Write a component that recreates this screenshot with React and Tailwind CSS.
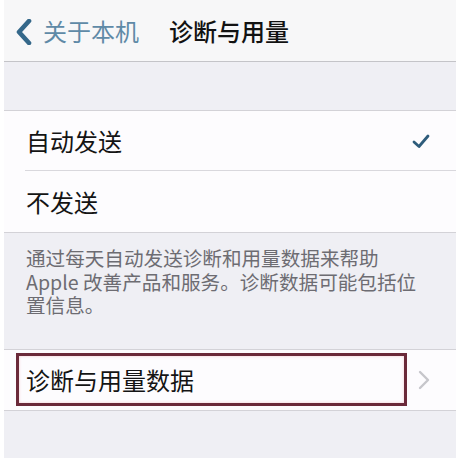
const font = { fontFamily: '"Noto Sans CJK SC", "Noto Sans", sans-serif' };

const Row = ({ children, right, border }) => (
    <div className="relative h-[60px] flex items-center bg-[#fdfcfe] pl-[22px] pr-[26px]">
        <span className="flex-1 text-[24px] leading-none text-[#141414]">{children}</span>
        {right}
        {border && <div className="absolute left-[21px] right-0 bottom-0 h-px bg-[#d9d8dd]" />}
    </div>
);

const footerLines = [
    '通过每天自动发送诊断和用量数据来帮助',
    'Apple 改善产品和服务。诊断数据可能包括位',
    '置信息。',
];

export default function App() {
    return (
        <div className="w-[456px] h-[458px] bg-white pl-[4px] overflow-hidden" style={font}>
            <div className="h-full bg-[#efeff4] flex flex-col">
                <div className="h-[62px] shrink-0 bg-[#f7f7f8] border-b border-[#c4c4c8] flex items-center">
                    <svg width="20" height="26" viewBox="0 0 20 26" className="ml-[10px] mt-[2px]">
                        <path d="M15 2 L5 13 L15 24" fill="none" stroke="#35688a" strokeWidth="4.6" strokeLinecap="round" strokeLinejoin="round" />
                    </svg>
                    <span className="ml-[9px] text-[24px] leading-none text-[#5f8aa7]">关于本机</span>
                    <span className="ml-[30px] text-[24px] leading-none font-medium text-[#121212]">诊断与用量</span>
                </div>

                <div className="h-[48px] shrink-0" />

                <div className="border-y border-[#d3d2d7]">
                    <Row
                        border
                        right={
                            <svg width="18" height="16" viewBox="0 0 18 16">
                                <path d="M2 9 L7 13.5 L16 3" fill="none" stroke="#2e5c7b" strokeWidth="2.8" strokeLinecap="round" strokeLinejoin="round" />
                            </svg>
                        }
                    >
                        自动发送
                    </Row>
                    <div className="h-[61px] flex items-center bg-[#fdfcfe] pl-[22px]">
                        <span className="text-[24px] leading-none text-[#141414]">不发送</span>
                    </div>
                </div>

                <div className="h-[116px] shrink-0 pl-[22px] pr-[20px] pt-[15px] text-[19.6px] text-[#6d6c72]">
                    {footerLines.map((line) => (
                        <div key={line} className="h-[23.5px] leading-[20px] whitespace-nowrap">
                            {line}
                        </div>
                    ))}
                </div>

                <div className="relative border-y border-[#d3d2d7]">
                    <Row
                        right={
                            <svg width="12" height="20" viewBox="0 0 12 20">
                                <path d="M2 2 L10 10 L2 18" fill="none" stroke="#c6c6cb" strokeWidth="2.4" strokeLinecap="round" strokeLinejoin="round" />
                            </svg>
                        }
                    >
                        诊断与用量数据
                    </Row>
                    <div className="absolute left-[12px] top-[3px] w-[391px] h-[53px] border-[3px] border-[#6b2a3a] shadow-[inset_0_0_3px_#f3c9d0]" />
                </div>
            </div>
        </div>
    );
}
